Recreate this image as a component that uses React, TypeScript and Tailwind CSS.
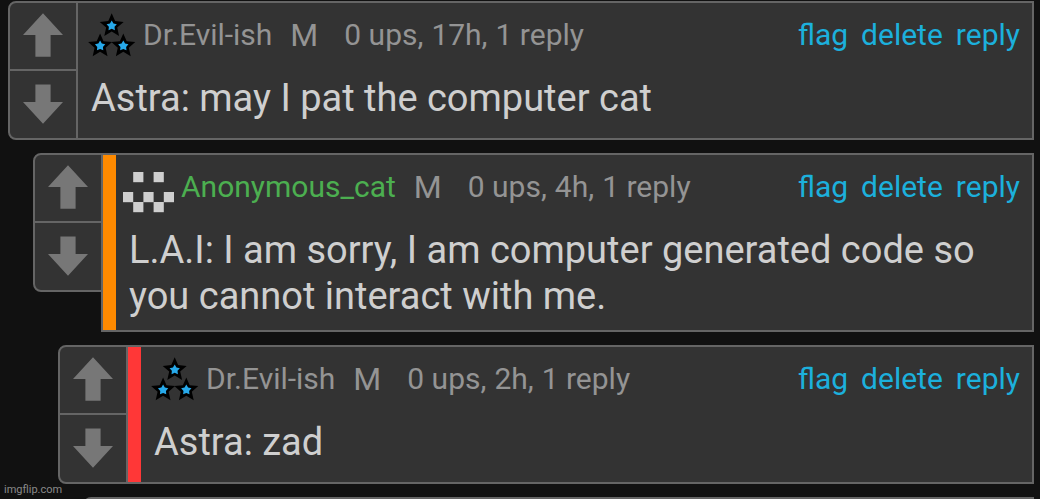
import React from "react";

type CommentData = {
  author: string;
  authorClass: string;
  icon: "stars" | "cat";
  info: string[];
  text: string;
  indentClass: string;
  barClass?: string;
};

const comments: CommentData[] = [
  {
    author: "Dr.Evil-ish",
    authorClass: "text-[#949494]",
    icon: "stars",
    info: ["0 ups,", "17h,", "1 reply"],
    text: "Astra: may I pat the computer cat",
    indentClass: "ml-2",
  },
  {
    author: "Anonymous_cat",
    authorClass: "text-[#4caf50]",
    icon: "cat",
    info: ["0 ups,", "4h,", "1 reply"],
    text: "L.A.I: I am sorry, I am computer generated code so you cannot interact with me.",
    indentClass: "ml-[33px]",
    barClass: "bg-[#ff8a00]",
  },
  {
    author: "Dr.Evil-ish",
    authorClass: "text-[#949494]",
    icon: "stars",
    info: ["0 ups,", "2h,", "1 reply"],
    text: "Astra: zad",
    indentClass: "ml-[58px]",
    barClass: "bg-[#ff3737]",
  },
];

function starPoints(cx: number, cy: number, r: number, ratio: number) {
  return Array.from({ length: 10 }, (_, i) => {
    const radius = i % 2 === 0 ? r : r * ratio;
    const a = -Math.PI / 2 + (i * Math.PI) / 5;
    return `${(cx + radius * Math.cos(a)).toFixed(2)},${(cy + radius * Math.sin(a)).toFixed(2)}`;
  }).join(" ");
}

function StarsIcon() {
  const centers = [
    [26.7, 13.8],
    [15.1, 34],
    [38.3, 34],
  ];
  return (
    <svg width="51" height="49" viewBox="0 0 51 49" aria-hidden="true">
      {centers.map(([x, y]) => (
        <g key={x}>
          <polygon points={starPoints(x, y, 12.6, 0.46)} fill="#000" />
          <polygon points={starPoints(x, y, 5.4, 0.55)} fill="#27a9ea" />
        </g>
      ))}
    </svg>
  );
}

function CatIcon() {
  const cells = [
    [1, 8],
    [3, 8],
    [0, 28],
    [2, 28],
    [4, 28],
    [1, 38],
    [3, 38],
  ];
  return (
    <svg width="51" height="49" viewBox="0 0 51 49" aria-hidden="true">
      {cells.map(([c, y]) => (
        <rect key={`${c}-${y}`} x={c * 10.2} y={y} width="10.2" height="10.2" fill="#cfcfcf" />
      ))}
    </svg>
  );
}

function Votes() {
  return (
    <div className="flex h-[139px] w-[70px] shrink-0 flex-col rounded-l-lg border-2 border-[#656565] bg-[#333]">
      <button type="button" aria-label="Upvote" className="flex h-[68px] justify-center border-b-2 border-[#656565] pt-[10px]">
        <svg width="40" height="44" viewBox="0 0 40 44" fill="#777">
          <path d="M20 0.3 40 22H27.6V43.8H12.4V22H0Z" />
        </svg>
      </button>
      <button type="button" aria-label="Downvote" className="flex flex-1 justify-center pt-[13px]">
        <svg width="40" height="40" viewBox="0 0 40 40" fill="#777">
          <path d="M12.4 0.5H27.6V18H40L20 39.8 0 18H12.4Z" />
        </svg>
      </button>
    </div>
  );
}

function Comment({ c }: { c: CommentData }) {
  return (
    <article className={`flex items-start ${c.indentClass}`}>
      <Votes />
      <div className="-ml-0.5 flex min-h-[139px] min-w-0 flex-1 border-2 border-[#656565] bg-[#333]">
        {c.barClass && <div className={`w-[13px] shrink-0 ${c.barClass}`} />}
        <div className="min-w-0 flex-1 pt-[9px] pb-[11px]">
          <header className="flex h-[50px] items-start pr-3 pl-[7px] text-[30px] leading-[46px] text-[#949494]">
            {c.icon === "stars" ? <StarsIcon /> : <CatIcon />}
            <a href="#author" className={`ml-[7px] ${c.authorClass}`}>
              {c.author}
            </a>
            <span className="ml-[18px] text-[32px]">M</span>
            <span className="ml-[26px] flex gap-2">
              {c.info.map((part) => (
                <span key={part}>{part}</span>
              ))}
            </span>
            <nav className="ml-auto flex gap-[13px] text-[#1cb0dc]">
              <a href="#flag">flag</a>
              <a href="#delete">delete</a>
              <a href="#reply">reply</a>
            </nav>
          </header>
          <p className="mt-[13px] px-[13px] text-[38px] leading-[46px] text-[#cfcfcf]">{c.text}</p>
        </div>
      </div>
    </article>
  );
}

export default function App() {
  return (
    <div className="relative h-screen overflow-hidden bg-[#111] font-['Roboto',sans-serif]">
      <main className="flex flex-col gap-[13px] pt-px pr-1.5">
        {comments.map((c) => (
          <Comment key={c.text} c={c} />
        ))}
        <div className="ml-[83px] h-16 rounded-tl-lg border-2 border-[#656565] bg-[#333]" />
      </main>
      <footer className="absolute bottom-0 left-1 text-[11px] leading-[18px] text-[#8a8a8a]">imgflip.com</footer>
    </div>
  );
}
